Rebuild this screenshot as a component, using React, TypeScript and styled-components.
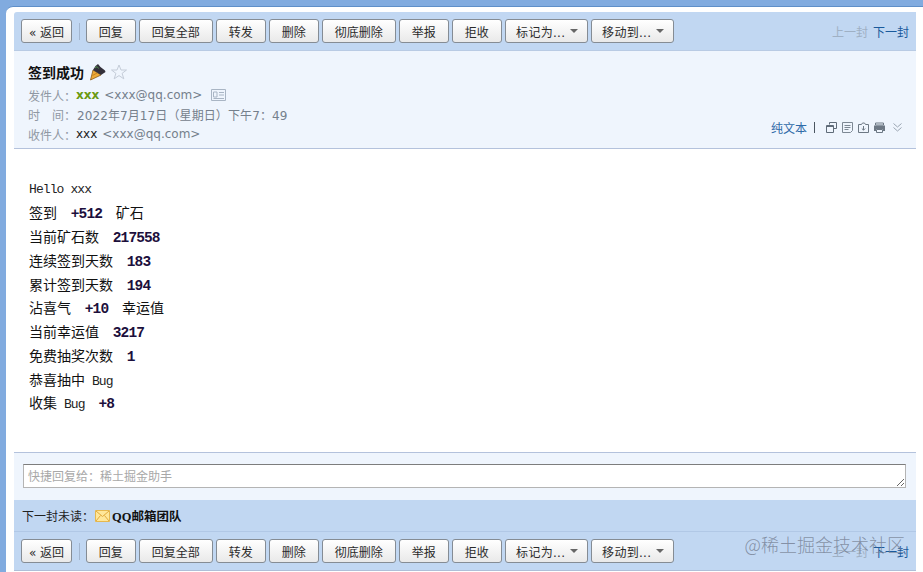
import React from 'react';
import styled, { createGlobalStyle } from 'styled-components';

const CJK = '"DejaVu Sans", "Noto Sans CJK SC", sans-serif';

const GlobalStyle = createGlobalStyle`
    html, body {
        margin: 0;
        padding: 0;
        background: #fff;
    }
    body {
        font-family: ${CJK};
        font-size: 12px;
    }
`;

const ACTIONS = ['回复', '回复全部', '转发', '删除', '彻底删除', '举报', '拒收'];
const MENUS = ['标记为...', '移动到...'];

const RESULT_LINES: React.ReactNode[] = [
    <><Han>签到</Han>{'  '}<Num>+512</Num>{'  '}<Han>矿石</Han></>,
    <><Han>当前矿石数</Han>{'  '}<Num>217558</Num></>,
    <><Han>连续签到天数</Han>{'  '}<Num>183</Num></>,
    <><Han>累计签到天数</Han>{'  '}<Num>194</Num></>,
    <><Han>沾喜气</Han>{'  '}<Num>+10</Num>{'  '}<Han>幸运值</Han></>,
    <><Han>当前幸运值</Han>{'  '}<Num>3217</Num></>,
    <><Han>免费抽奖次数</Han>{'  '}<Num>1</Num></>,
    <><Han>恭喜抽中</Han> Bug</>,
    <><Han>收集</Han> Bug{'  '}<Num>+8</Num></>,
];

const Toolbar = () => (
    <Bar>
        <BackButton>« 返回</BackButton>
        <BarSeparator />
        <ButtonGroup>
            {ACTIONS.map((label) => (
                <Button key={label}>{label}</Button>
            ))}
            {MENUS.map((label) => (
                <MenuButton key={label}>
                    {label}
                    <Caret />
                </MenuButton>
            ))}
        </ButtonGroup>
        <Pager>
            <PagerLink $disabled>上一封</PagerLink>
            <PagerLink>下一封</PagerLink>
        </Pager>
    </Bar>
);

const ToolIcons = () => (
    <IconRow>
        <svg width="13" height="13" viewBox="0 0 13 13" fill="none" stroke="#5f6b78">
            <path d="M4.500 3.500V1.500h7v6h-3" />
            <path d="M1.500 4.500h7v7h-7z" />
            <path d="M1.500 5.500h7" />
        </svg>
        <svg width="13" height="13" viewBox="0 0 13 13" fill="none" stroke="#7d8894">
            <path d="M1.500 1.500h10v8l-2 2h-8z" />
            <path d="M3.500 4.500h6M3.500 6.500h6M3.500 8.500h4" />
        </svg>
        <svg width="13" height="13" viewBox="0 0 13 13" fill="none" stroke="#6d7884">
            <path d="M1.500 3.500h3l1-1.500h2l1 1.500h3v8h-10z" />
            <path d="M6.500 5v4M4.800 7.500l1.700 1.700 1.700-1.700" />
        </svg>
        <svg width="13" height="13" viewBox="0 0 13 13">
            <path d="M2.500 4V2h8v2z" fill="none" stroke="#6d7884" />
            <path d="M1 4.500h11v5.500h-2V8H3v2H1z" fill="#6d7884" />
            <path d="M3.500 8.500h6v3h-6z" fill="none" stroke="#6d7884" />
        </svg>
        <Expand width="9" height="9" viewBox="0 0 9 9" fill="none" stroke="#9aa5b2">
            <path d="M.5 .5l4 3.500 4-3.500M.5 4.500l4 3.500 4-3.500" />
        </Expand>
    </IconRow>
);

const App = () => (
    <Shell>
        <GlobalStyle />
        <Sheet>
            <Panel>
                <Toolbar />
                <Header>
                    <HeaderMain>
                        <Subject>
                            签到成功
                            <svg width="18" height="18" viewBox="0 0 18 18">
                                <path d="M1.500 17 4 7l8 5z" fill="#eeaa36" stroke="#8a5a14" strokeWidth=".8" />
                                <path d="M4 7 6.500 3 9 1l2.500 3 4.500 3.500 .5 1.500-4.500 3z" fill="#33303a" />
                                <path d="M6 5l2-1.500 1.500 2" fill="none" stroke="#4f8f4a" />
                                <path d="M3.500 12.500 8 10" fill="none" stroke="#b9761c" strokeWidth=".8" />
                            </svg>
                            <svg width="18" height="18" viewBox="0 0 18 18" fill="none" stroke="#c4ccd8">
                                <path d="M9 2l2 5h5.500l-4.400 3.400 1.700 5.400L9 12.600l-4.800 3.200 1.700-5.400L1.500 7H7z" />
                            </svg>
                        </Subject>
                        <MetaRow>
                            <MetaLabel>发件人：</MetaLabel>
                            <SenderName>xxx</SenderName>
                            <Address>&lt;xxx@qq.com&gt;</Address>
                            <CardIcon width="15" height="12" viewBox="0 0 15 12" fill="none" stroke="#a9b5c4">
                                <path d="M.5 .5h14v11H.5z" />
                                <path d="M2.500 3h3.500v5H2.500zM8 3.500h5M8 6h5M2.500 9.500h10.500" />
                            </CardIcon>
                        </MetaRow>
                        <MetaRow>
                            <MetaLabel>时&emsp;间：</MetaLabel>
                            <DateText>2022年7月17日（星期日）下午7：49</DateText>
                        </MetaRow>
                        <MetaRow>
                            <MetaLabel>收件人：</MetaLabel>
                            <RecipientName>xxx</RecipientName>
                            <Address>&lt;xxx@qq.com&gt;</Address>
                        </MetaRow>
                    </HeaderMain>
                    <HeaderTools>
                        <PlainText>纯文本</PlainText>
                        <ToolSeparator />
                        <ToolIcons />
                    </HeaderTools>
                </Header>
                <Body>
                    <MailLine>Hello xxx</MailLine>
                    {RESULT_LINES.map((line, i) => (
                        <MailLine key={i}>{line}</MailLine>
                    ))}
                </Body>
                <QuickReply>
                    <ReplyBox placeholder="快捷回复给：稀土掘金助手" />
                </QuickReply>
                <NextUnread>
                    下一封未读：
                    <MailIcon width="15" height="12" viewBox="0 0 15 12">
                        <path d="M.5 .5h14v11H.5z" fill="#ffe79a" stroke="#e6b84f" />
                        <path d="M1 1l6.500 5.500L14 1M1 11l4.500-5.500M14 11 9.500 5.500" fill="none" stroke="#e0a93c" />
                    </MailIcon>
                    <NextSender>QQ邮箱团队</NextSender>
                </NextUnread>
                <BottomBar>
                    <Toolbar />
                </BottomBar>
            </Panel>
        </Sheet>
        <Watermark>@稀土掘金技术社区</Watermark>
    </Shell>
);

const Shell = styled.div`
    position: relative;
    width: 923px;
    height: 572px;
    overflow: hidden;
    background: #81abdf;
    padding-top: 6px;
    padding-left: 6px;
    box-sizing: border-box;
`;

const Sheet = styled.div`
    height: 566px;
    padding: 5px 7px 0 8px;
    box-sizing: border-box;
    background: #fff;
    border-top: 1px solid #5f8fc8;
    border-top-left-radius: 7px;
`;

const Panel = styled.div`
    display: flex;
    flex-direction: column;
`;

const Bar = styled.div`
    display: flex;
    align-items: center;
    height: 38px;
    padding: 0 7px;
    background: #c1d7f2;
    border-top-left-radius: 3px;
`;

const BarSeparator = styled.span`
    width: 1px;
    height: 17px;
    margin: 0 6.500px 0 6.500px;
    background: #a3b6cf;
`;

const ButtonGroup = styled.div`
    display: flex;
    gap: 3.500px;
`;

const Button = styled.button`
    display: flex;
    align-items: center;
    height: 24px;
    padding: 0 11.750px;
    border: 1px solid #858c94;
    border-radius: 3px;
    background: linear-gradient(#ffffff, #e9e9e9);
    color: #2b2b2b;
    font-family: ${CJK};
    font-size: 12px;
    white-space: nowrap;
`;

const BackButton = styled(Button)`
    width: 51px;
    padding: 0;
    justify-content: center;
`;

const MenuButton = styled(Button)`
    width: 82.500px;
    padding: 0 0 0 10px;
    gap: 5px;
    letter-spacing: 0.300px;
`;

const Caret = styled.span`
    width: 0;
    height: 0;
    border-style: solid;
    border-width: 4px 4px 0 4px;
    border-color: #666 transparent transparent transparent;
`;

const Pager = styled.div`
    display: flex;
    gap: 5px;
    margin-left: auto;
`;

const PagerLink = styled.span<{ $disabled?: boolean }>`
    color: ${({ $disabled }) => ($disabled ? '#9fb0c4' : '#1a5a9c')};
    font-size: 12px;
`;

const Header = styled.div`
    display: flex;
    justify-content: space-between;
    align-items: flex-end;
    height: 99px;
    padding: 0 14px 12px 14px;
    box-sizing: border-box;
    background: #eff5fd;
    border-top: 1px solid #b9cbe4;
    border-bottom: 1px solid #b4c2dc;
`;

const HeaderMain = styled.div`
    display: flex;
    flex-direction: column;
    margin-bottom: -8px;
`;

const Subject = styled.div`
    display: flex;
    align-items: center;
    gap: 3px;
    height: 22px;
    margin-bottom: 3px;
    color: #111;
    font-size: 14px;
    font-weight: 700;

    svg:first-of-type {
        margin-left: 2px;
    }
`;

const MetaRow = styled.div`
    display: flex;
    align-items: center;
    height: 19.500px;
    color: #75808c;
    font-size: 12px;
    white-space: nowrap;
`;

const MetaLabel = styled.span`
    width: 48px;
    color: #8f98a3;
`;

const SenderName = styled.b`
    color: #6b9a12;
`;

const RecipientName = styled.span`
    color: #1c1c1c;
`;

const Address = styled.span`
    margin-left: 5px;
`;

const DateText = styled.span`
    margin-left: 1px;
    letter-spacing: 0.100px;
`;

const CardIcon = styled.svg`
    margin-left: 9px;
`;

const HeaderTools = styled.div`
    display: flex;
    align-items: center;
`;

const PlainText = styled.span`
    color: #2f6aa8;
    font-size: 12px;
`;

const ToolSeparator = styled.span`
    width: 1px;
    height: 11px;
    margin: 0 10px 0 7px;
    background: #4a5560;
`;

const IconRow = styled.div`
    display: flex;
    align-items: center;
    gap: 3px;
`;

const Expand = styled.svg`
    margin-left: 4px;
`;

const Body = styled.div`
    height: 303px;
    padding: 28.500px 15px 0;
    box-sizing: border-box;
    background: #fff;
`;

const MailLine = styled.div`
    height: 23.750px;
    line-height: 23.750px;
    color: #222;
    font-family: "Liberation Mono", monospace;
    font-size: 13px;
    letter-spacing: -0.900px;
    white-space: pre;
`;

function Han({ children }: { children: React.ReactNode }) {
    return <HanText>{children}</HanText>;
}

function Num({ children }: { children: React.ReactNode }) {
    return <NumText>{children}</NumText>;
}

const HanText = styled.span`
    color: #111;
    font-family: "Noto Sans CJK SC", sans-serif;
    font-size: 14px;
    letter-spacing: 0;
`;

const NumText = styled.b`
    color: #1c0f3c;
    font-family: "Liberation Mono", monospace;
    font-size: 14.500px;
    letter-spacing: -0.900px;
`;

const QuickReply = styled.div`
    height: 48px;
    padding: 11px 10px 0 9px;
    box-sizing: border-box;
    background: #eff5fd;
    border-top: 1px solid #b4c2dc;
`;

const ReplyBox = styled.textarea`
    display: block;
    width: 100%;
    height: 24px;
    padding: 2px 4px;
    box-sizing: border-box;
    resize: vertical;
    border: 1px solid #b4b4b4;
    border-top-color: #7d7d7d;
    background: #fff;
    font-family: ${CJK};
    font-size: 12px;

    &::placeholder {
        color: #a8a8a8;
    }
`;

const NextUnread = styled.div`
    display: flex;
    align-items: center;
    height: 31px;
    padding: 0 8px;
    background: #c1d7f2;
    color: #222;
    font-size: 12px;
`;

const MailIcon = styled.svg`
    margin-left: 1px;
`;

const NextSender = styled.b`
    margin-left: 2px;
    color: #111;
    font-family: "Liberation Serif", "Noto Sans CJK SC", serif;
    font-size: 12.500px;
`;

const BottomBar = styled.div`
    background: #c1d7f2;
    border-top: 1px solid #b1c8e6;
    border-bottom: 1px solid #aebfd8;
`;

const Watermark = styled.div`
    position: absolute;
    right: 18px;
    top: 531px;
    color: rgba(115, 125, 145, 0.8);
    font-family: "Noto Sans CJK SC", sans-serif;
    font-size: 18px;
    font-weight: 300;
    white-space: nowrap;
`;

export default App;
